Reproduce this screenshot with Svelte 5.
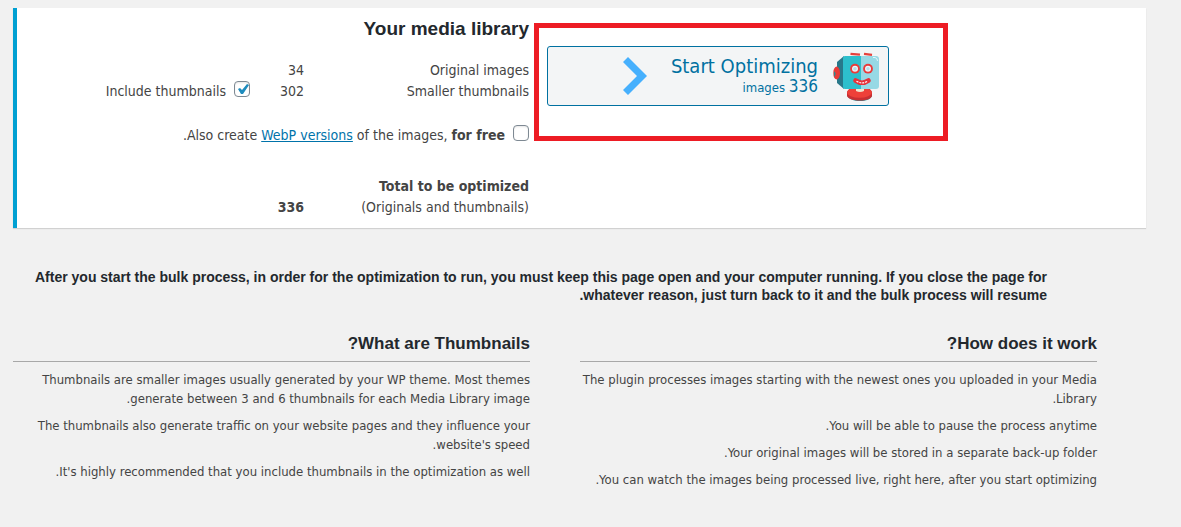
<script>
  let includeThumbnails = $state(true);
  let createWebp = $state(false);

  const originals = 34;
  const thumbnails = 302;
  const total = 336;

  const topics = [
    {
      title: 'What are Thumbnails?',
      items: [
        'Thumbnails are smaller images usually generated by your WP theme. Most themes generate between 3 and 6 thumbnails for each Media Library image.',
        "The thumbnails also generate traffic on your website pages and they influence your website's speed.",
        "It's highly recommended that you include thumbnails in the optimization as well."
      ]
    },
    {
      title: 'How does it work?',
      items: [
        'The plugin processes images starting with the newest ones you uploaded in your Media Library.',
        'You will be able to pause the process anytime.',
        'Your original images will be stored in a separate back-up folder.',
        'You can watch the images being processed live, right here, after you start optimizing.'
      ]
    }
  ];
</script>

<main>
  <section class="card">
    <div class="stats" dir="rtl">
      <h2>Your media library</h2>
      <div class="rows">
        <span>Original images</span>
        <span>{originals}</span>
        <span></span>
        <span>Smaller thumbnails</span>
        <span>{thumbnails}</span>
        <label class="check">
          <input type="checkbox" bind:checked={includeThumbnails} />
          <span>Include thumbnails</span>
        </label>
      </div>
      <div class="webp">
        <input id="webp" type="checkbox" bind:checked={createWebp} />
        <label for="webp">Also create <a href="#webp">WebP versions</a> of the images, <b>for free</b>.</label>
      </div>
      <div class="rows">
        <b>Total to be optimized</b>
        <span></span>
        <span></span>
        <span>(Originals and thumbnails)</span>
        <b>{total}</b>
      </div>
    </div>

    <div class="action">
      <button type="button">
        <svg class="arrow" viewBox="0 0 24 38" aria-hidden="true">
          <path d="M0 5L5 0L24 19L5 38L0 33L14 19Z" fill="#46b0fd" />
        </svg>
        <span class="caption">
          <span class="start">Start Optimizing</span>
          <span class="count">images <span>{total}</span></span>
        </span>
        <svg class="robot" viewBox="0 0 48 50" aria-hidden="true">
          <path d="M15 43C15 39 20 37 27.500 37S40 39 40 43V45C39 48 34 50 28 50S16 48 15 44Z" fill="#2f8790" />
          <path d="M15 42C15 38 20 36 27.500 36S40 38 40 42V45C39 48 34 49.500 28 49.500S16 48 15 45Z" fill="#c92f32" />
          <ellipse cx="27.500" cy="41.500" rx="12.300" ry="5.200" fill="#ee4039" />
          <path d="M24 37H32V40Q28 42 24 40Z" fill="#f2e5cf" />
          <path d="M18.500 2.800L28 3.600" stroke="#e6413c" stroke-width="2.200" />
          <path d="M32 2.800L40 3.800" stroke="#e6413c" stroke-width="2.200" />
          <path d="M12 5L5 11V32L12 38Z" fill="#28788a" />
          <path d="M13 5H30V38H13Q11 38 11 36V7Q11 5 13 5Z" fill="#2dbfcc" />
          <path d="M29 5H44Q47 5 47 8V35Q47 38 44 38H29Z" fill="#97d9e5" />
          <path d="M41 6.500H43Q45.500 7 45.500 10" fill="none" stroke="#e4f6fa" stroke-width="1" />
          <path d="M5 15.500Q8 17 8 22T5 28.500Q1.300 28 1.300 22T5 15.500Z" fill="#e93a37" />
          <path d="M2 20L3.500 22V24L2 26Z" fill="#2f8790" />
          <circle cx="23" cy="17.700" r="4.900" fill="#e93b3b" />
          <circle cx="36" cy="17.700" r="4.900" fill="#e93b3b" />
          <circle cx="23" cy="17.700" r="3" fill="#eef8fb" />
          <circle cx="36" cy="17.700" r="3" fill="#eef8fb" />
          <circle cx="23" cy="17.700" r="1.800" fill="#b9dcea" />
          <circle cx="36" cy="17.700" r="1.800" fill="#b9dcea" />
          <path d="M23.500 29.500Q30 34 36.500 29.500" fill="none" stroke="#e5323a" stroke-width="4.600" stroke-linecap="round" />
          <path d="M24.500 30.200Q30 33.500 35.500 30.200" fill="none" stroke="#fff" stroke-width="1.200" stroke-dasharray="2 1" />
        </svg>
      </button>
      <div class="highlight"></div>
    </div>
  </section>

  <p class="notice" dir="rtl">
    After you start the bulk process, in order for the optimization to run, you must keep this page open and your computer running. If you close the page for whatever reason, just turn back to it and the bulk process will resume.
  </p>

  <div class="topics">
    {#each topics as topic}
      <section dir="rtl">
        <h3>{topic.title}</h3>
        {#each topic.items as item}
          <p>{item}</p>
        {/each}
      </section>
    {/each}
  </div>
</main>

<style>
  :global(body) {
    margin: 0;
    background: #f1f1f1;
  }

  main {
    padding: 8px 35px 0 13px;
    font: 14px/21px "DejaVu Sans Condensed", Tahoma, sans-serif;
    color: #444;
  }

  .card {
    display: grid;
    grid-template-columns: minmax(0, 512px) minmax(0, 342px);
    column-gap: 18px;
    padding: 8px 0 10px;
    border-left: 4px solid #00a0d2;
    background: #fff;
    box-shadow: 0 1px 1px rgba(0, 0, 0, 0.13);
  }

  h2,
  h3,
  .notice {
    font-family: "Liberation Sans", Arial, sans-serif;
    font-weight: 700;
    color: #23282d;
  }

  h2 {
    margin: 0 0 18px;
    font-size: 19px;
    line-height: 26px;
  }

  .rows {
    display: grid;
    grid-template-columns: 225px 54px 1fr;
  }

  .check,
  .webp {
    display: flex;
    align-items: flex-start;
    gap: 8px;
  }

  .webp {
    margin: 23px 0 30px;
  }

  input {
    appearance: none;
    box-sizing: border-box;
    flex: none;
    width: 16px;
    height: 16px;
    margin: 0;
    border: 1px solid #7e8993;
    border-radius: 4px;
    background: #fff;
    box-shadow: inset 0 1px 2px rgba(0, 0, 0, 0.1);
  }

  input:checked {
    background: #fff url("data:image/svg+xml,%3Csvg xmlns='http://www.w3.org/2000/svg' viewBox='0 0 14 14'%3E%3Cpath d='M3 7l2-1 2 2 5-6 2 1-6 9H6z' fill='%231e8cbe'/%3E%3C/svg%3E") center / 14px 14px no-repeat;
  }

  a {
    color: #0073aa;
  }

  .action {
    position: relative;
    align-self: start;
    padding-top: 30px;
  }

  button {
    box-sizing: border-box;
    display: flex;
    align-items: center;
    justify-content: flex-end;
    width: 100%;
    height: 60px;
    padding: 0 8px;
    border: 1px solid #0071a1;
    border-radius: 3px;
    background: #f3f5f6;
    font: inherit;
    color: #0071a1;
    cursor: pointer;
  }

  .arrow {
    width: 24px;
    height: 38px;
    margin-right: 24px;
  }

  .caption {
    display: flex;
    flex-direction: column;
    align-items: flex-end;
  }

  .start {
    font-size: 20px;
    line-height: 22px;
  }

  .count {
    font-size: 13px;
    line-height: 18px;
  }

  .count span {
    font-size: 17px;
  }

  .robot {
    width: 48px;
    height: 50px;
    margin-left: 14px;
  }

  .highlight {
    position: absolute;
    inset: 7px -59px -35px -13px;
    border: 5px solid #ed1c24;
    pointer-events: none;
  }

  .notice {
    margin: 40px 99px 0 0;
    font-size: 14px;
    line-height: 18px;
  }

  .topics {
    display: grid;
    grid-template-columns: 1fr 1fr;
    column-gap: 50px;
    margin: 29px 49px 0 0;
    font-size: 13px;
    line-height: 19px;
  }

  h3 {
    margin: 0 0 8px;
    padding-bottom: 6px;
    border-bottom: 1px solid #a8a8a8;
    font-size: 17px;
    line-height: 22px;
  }

  .topics p {
    margin: 0 0 8px;
  }
</style>
